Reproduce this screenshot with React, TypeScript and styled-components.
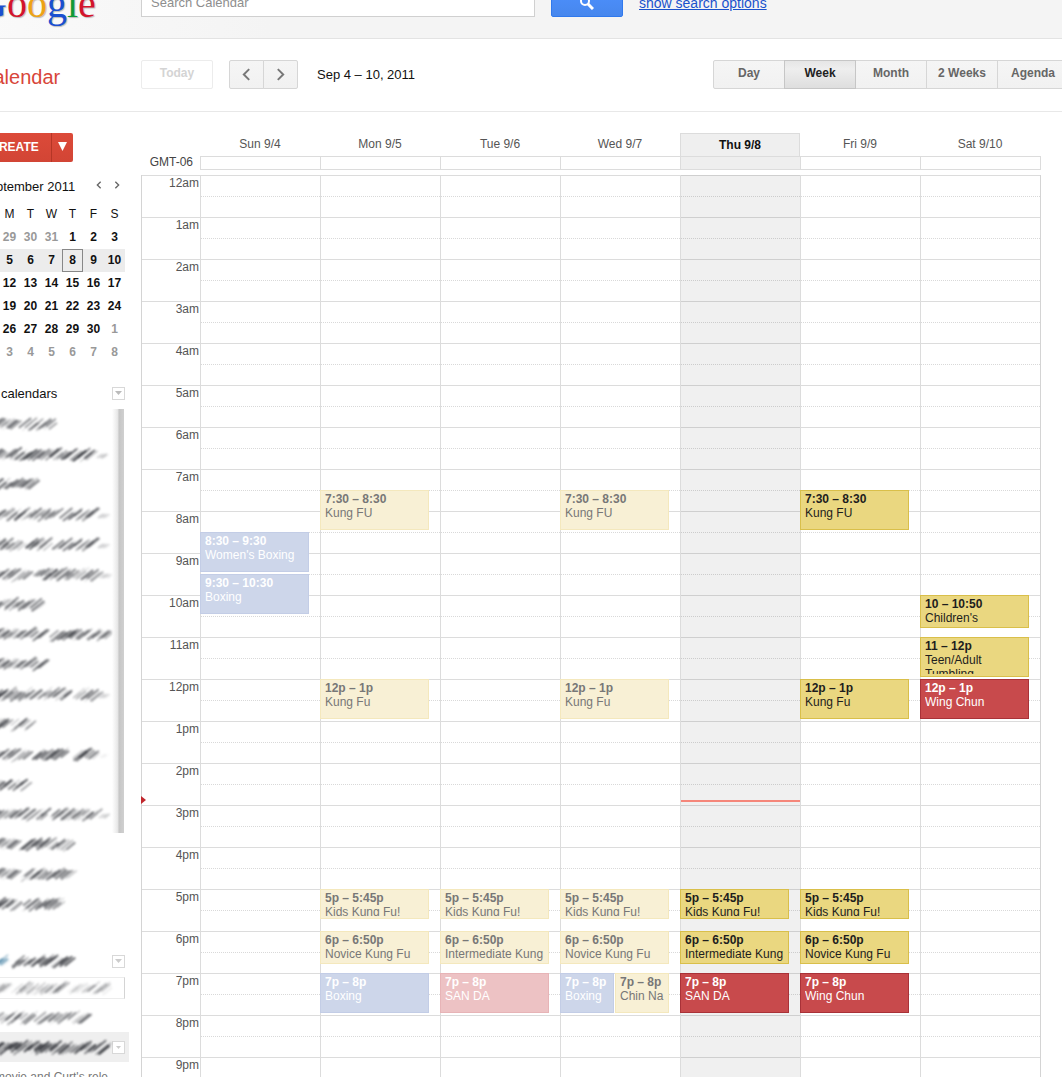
import React from "react";
import styled, { createGlobalStyle, css } from "styled-components";

const GlobalStyle = createGlobalStyle`
  *, *::before, *::after { box-sizing: border-box; }
  body {
    margin: 0;
    background: #fff;
    color: #222;
    font-family: "Liberation Sans", Arial, Helvetica, sans-serif;
    font-size: 12px;
  }
  button, input { font: inherit; color: inherit; margin: 0; }
  button { cursor: pointer; }
`;

const HOUR = 42;
const LINE = "#dcdcdc";

/* ---------- page frame ---------- */

const Viewport = styled.div`
  height: 100vh;
  overflow: hidden;
`;

const Page = styled.div`
  margin: -30px 0 0 -30px;
`;

const Header = styled.header`
  display: grid;
  grid-template-columns: 171px 394px 1fr;
  align-items: start;
  height: 69px;
  background: linear-gradient(90deg, #fafafa, #f4f4f4 300px);
  border-bottom: 1px solid #e3e3e3;
`;

const Logo = styled.div`
  padding: 14px 0 0 8px;
  font-family: "Liberation Serif", "Times New Roman", serif;
  font-size: 40px;
  line-height: 40px;
  text-shadow: 1px 1px 1px #bbb;
`;

const Letter = styled.span<{ $color: string }>`
  color: ${(p) => p.$color};
`;

const SearchInput = styled.input`
  width: 100%;
  height: 29px;
  margin-top: 18px;
  padding: 0 9px;
  border: 1px solid #d0d0d0;
  border-radius: 0;
  background: #fff;
  font-size: 13px;
  &::placeholder { color: #8e8e8e; opacity: 1; }
`;

const SearchActions = styled.div`
  display: flex;
  align-items: center;
  gap: 16px;
  padding: 18px 0 0 16px;
`;

const SearchButton = styled.button`
  display: flex;
  align-items: center;
  justify-content: center;
  width: 72px;
  height: 29px;
  padding: 0;
  border: 1px solid #3079ed;
  border-radius: 2px;
  background: linear-gradient(#4d90fe, #4787ed);
`;

const OptionsLink = styled.a`
  color: #1a52cc;
  font-size: 14px;
  line-height: 20px;
`;

const Toolbar = styled.div`
  display: flex;
  align-items: center;
  height: 73px;
  padding-bottom: 2px;
  border-bottom: 1px solid #e8e8e8;
  overflow: hidden;
`;

const AppTitle = styled.h1`
  flex: none;
  width: 171px;
  margin: 0;
  padding: 6px 0 0 9px;
  color: #d8463a;
  font-size: 20px;
  font-weight: normal;
  line-height: 24px;
`;

const TodayButton = styled.button`
  width: 72px;
  height: 29px;
  padding: 0 0 2px;
  border: 1px solid #ececec;
  border-radius: 2px;
  background: #fff;
  color: #d4d4d4;
  font-weight: bold;
`;

const ButtonGroup = styled.div`
  display: flex;
  flex: none;
`;

const groupButton = css`
  height: 29px;
  border: 1px solid #d6d6d6;
  background: linear-gradient(#f5f5f5, #f1f1f1);
  &:first-child { border-radius: 2px 0 0 2px; }
  &:last-child { border-radius: 0 2px 2px 0; }
  & + & { margin-left: -1px; }
`;

const StepButton = styled.button`
  ${groupButton}
  display: flex;
  align-items: center;
  justify-content: center;
  width: 35px;
  padding: 0;
`;

const StepGroup = styled(ButtonGroup)`
  margin: 0 19px 0 16px;
`;

const RangeLabel = styled.div`
  flex: 1;
  color: #111;
  font-size: 13px;
`;

const ViewGroup = styled(ButtonGroup)`
  margin-right: -7px;
`;

const ViewButton = styled.button<{ $active?: boolean }>`
  ${groupButton}
  width: 72px;
  padding: 0 0 2px;
  color: #666;
  font-weight: bold;
  ${(p) =>
    p.$active &&
    css`
      position: relative;
      border-color: #c6c6c6;
      background: linear-gradient(#e6e6e6, #eee 30%, #dedede);
      color: #222;
    `}
`;

const Body = styled.div`
  display: grid;
  grid-template-columns: 171px minmax(0, 1fr);
`;

/* ---------- sidebar ---------- */

const Sidebar = styled.aside`
  padding: 21px 12px 0 8px;
`;

const Section = styled.div`
  width: 147px;
`;

const CreateGroup = styled.div`
  display: flex;
  width: max-content;
`;

const CreateButton = styled.button<{ $menu?: boolean }>`
  display: flex;
  align-items: center;
  justify-content: center;
  width: ${(p) => (p.$menu ? 22 : 73)}px;
  height: 29px;
  padding: 0 0 2px;
  border: 0;
  border-left: ${(p) => (p.$menu ? "1px solid #b53626" : "0")};
  border-radius: ${(p) => (p.$menu ? "0 2px 2px 0" : "2px 0 0 2px")};
  background: linear-gradient(#dc4a39, #d24535);
  color: #fff;
  font-weight: bold;
`;

const MonthBar = styled.div`
  display: flex;
  align-items: center;
  height: 20px;
  margin: 14px 0 7px;
  padding-left: 2px;
  color: #111;
  font-size: 13px;
`;

const MonthName = styled.span`
  flex: 1;
`;

const MonthStep = styled.button`
  display: flex;
  align-items: center;
  justify-content: center;
  width: 18px;
  height: 16px;
  padding: 0 0 2px 2px;
  border: 0;
  background: none;
`;

const MiniMonth = styled.table`
  width: 147px;
  table-layout: fixed;
  border-collapse: collapse;
  color: #111;
  text-align: center;
  th, td { height: 23px; padding: 0; line-height: 21px; }
  th { font-weight: normal; }
`;

const WeekRow = styled.tr<{ $current: boolean }>`
  background: ${(p) => (p.$current ? "#ececec" : "transparent")};
`;

const MiniDay = styled.td<{ $muted: boolean; $today: boolean }>`
  color: ${(p) => (p.$muted ? "#999" : "#111")};
  font-weight: bold;
  outline: ${(p) => (p.$today ? "1px solid #888" : "none")};
  outline-offset: -1px;
`;

const ListHeading = styled.div`
  display: flex;
  align-items: center;
  justify-content: space-between;
  height: 20px;
  color: #111;
  font-size: 13px;
`;

const MyHeading = styled(ListHeading)`
  margin: 19px 0 6px;
  padding-left: 2px;
`;

const OtherHeading = styled(ListHeading)`
  margin: 32px 0 6px;
`;

const MenuButton = styled.button`
  display: flex;
  flex: none;
  align-items: center;
  justify-content: center;
  width: 13px;
  height: 13px;
  padding: 0;
  border: 1px solid #d8d8d8;
  background: #fff;
`;

const CalendarList = styled.ul`
  position: relative;
  margin: 0;
  padding: 0;
  list-style: none;
`;

const ListShade = styled.div`
  position: absolute;
  top: 0;
  right: 1px;
  width: 12px;
  height: 424px;
  background: linear-gradient(90deg, rgba(255, 255, 255, 0), #e8e8e8 45%, #c6c6c6 60%, #d0d0d0);
`;

const CalendarItem = styled.li<{ $selected?: boolean }>`
  display: flex;
  align-items: center;
  justify-content: space-between;
  height: 30px;
  width: ${(p) => (p.$selected ? 151 : 147)}px;
  padding-right: ${(p) => (p.$selected ? 4 : 0)}px;
  background: ${(p) => (p.$selected ? "#efefef" : "transparent")};
  color: #777;
`;

const CalendarText = styled.span`
  padding-left: 17px;
  white-space: nowrap;
`;

const AddField = styled.div`
  display: grid;
  height: 22px;
  margin-bottom: 3px;
  > * { grid-area: 1 / 1; }
`;

const AddInput = styled.input`
  width: 100%;
  height: 22px;
  border: 1px solid #d4d4d4;
  border-top-color: #ececec;
  border-bottom-color: #ececec;
  background: #fff;
`;

type Span = [number, number];

const SmudgeSvg = styled.svg`
  display: block;
  flex: none;
  filter: blur(1px);
`;

const noise = (n: number) => {
  const v = Math.sin(n * 127.1 + 11.7) * 43758.5453;
  return v - Math.floor(v);
};

/* Pencil-like hatching that stands for a hidden calendar name. */
function Smudge({ spans, tone = 0.5, fade, tint }: { spans: Span[]; tone?: number; fade?: number; tint?: string }) {
  const strokes: React.ReactNode[] = [];
  const hatch = (from: number, to: number, weight: number, low: boolean) => {
    for (let x = from; x < to - 4; x += 2) {
      const a = noise(x + to * 3);
      const b = noise(x * 5 + to);
      const c = noise(x * 9 + to * 7);
      const mid = low ? 13 : 9 + a * 5;
      const half = low ? 2 : 3 + b * 3;
      strokes.push(
        <line
          key={`${from}-${x}`}
          x1={22 + x + 2 - half}
          y1={mid + half * 0.8}
          x2={22 + x + 2 + half}
          y2={mid - half * 0.8}
          stroke={tint && x < 8 ? tint : "#303238"}
          strokeWidth={1.2 + c}
          strokeLinecap="round"
          opacity={weight * (0.2 + c * 1.1)}
        />
      );
    }
  };
  spans.forEach(([a, b]) => hatch(a, b, tone, false));
  if (fade) hatch(spans[spans.length - 1][1], fade, tone * 0.35, true);
  return (
    <SmudgeSvg width="134" height="22" viewBox="0 0 134 22" aria-hidden="true">
      {strokes}
    </SmudgeSvg>
  );
}

/* ---------- week view ---------- */

const Week = styled.main`
  padding: 21px 21px 0 0;
`;

const HeadRow = styled.div`
  display: grid;
  grid-template-columns: 59px repeat(7, minmax(0, 1fr));
  padding-right: 1px;
`;

const DayName = styled.div<{ $today: boolean }>`
  height: 23px;
  line-height: 23px;
  color: #555;
  text-align: center;
  ${(p) =>
    p.$today &&
    css`
      border: 1px solid ${LINE};
      border-bottom: 0;
      background: #efefef;
      color: #111;
      font-weight: bold;
    `}
`;

const Zone = styled.div`
  padding-right: 7px;
  color: #444;
  line-height: 12px;
  text-align: right;
`;

const AllDayCell = styled.div<{ $today: boolean }>`
  height: 14px;
  border: 1px solid ${LINE};
  border-right: 0;
  background: ${(p) => (p.$today ? "#eee" : "#fff")};
  &:last-child { margin-right: -1px; border-right: 1px solid ${LINE}; }
`;

const TimeGrid = styled.div`
  position: relative;
  display: grid;
  margin-top: 5px;
  border: 1px solid #d4d4d4;
  border-width: 0 1px;
`;

const Hours = styled.div`
  grid-area: 1 / 1;
`;

const HourRow = styled.div`
  display: grid;
  grid-template-columns: 58px 1fr;
  height: ${HOUR}px;
  border-top: 1px solid ${LINE};
`;

const HourLabel = styled.div`
  padding-right: 1px;
  color: #555;
  line-height: 15px;
  text-align: right;
`;

const HalfLine = styled.div`
  height: 21px;
  border-bottom: 1px dotted #d9d9d9;
`;

const Days = styled.div`
  grid-area: 1 / 1;
  display: grid;
  grid-template-columns: repeat(7, minmax(0, 1fr));
  padding-left: 58px;
`;

/* Each row of a day is five minutes long. */
const DayColumn = styled.div<{ $today: boolean }>`
  display: grid;
  grid-template-columns: repeat(2, minmax(0, 1fr));
  grid-template-rows: repeat(288, minmax(0, 1fr));
  column-gap: 2px;
  height: ${HOUR * 24}px;
  padding-right: 11px;
  border-left: 1px solid ${LINE};
  background: ${(p) => (p.$today ? "rgba(0, 0, 0, 0.06)" : "transparent")};
`;

const palette = {
  gold: ["#ead780", "#d9bf4a", "#1d1d1d"],
  goldPast: ["#f8f0d5", "#f4e8bd", "#777"],
  bluePast: ["#cdd6ea", "#c3cde6", "#fff"],
  red: ["#c84a4c", "#a93238", "#fff"],
  redPast: ["#edc2c4", "#e7b4b7", "#fff"],
};
type Tone = keyof typeof palette;

const columns = { full: "1 / 3", left: "1", right: "2" };

const EventBox = styled.div<{ $tone: Tone; $start: number; $end: number; $side: keyof typeof columns }>`
  display: flex;
  flex-direction: column;
  min-width: 0;
  min-height: 0;
  grid-column: ${(p) => columns[p.$side]};
  grid-row: ${(p) => Math.round(p.$start * 12) + 1} / ${(p) => Math.round(p.$end * 12) + 1};
  margin: 0 0 2px -1px;
  padding: 1px 2px 2px 4px;
  border: 1px solid ${(p) => palette[p.$tone][1]};
  background: ${(p) => palette[p.$tone][0]};
  color: ${(p) => palette[p.$tone][2]};
  line-height: 14px;
`;

const EventText = styled.div`
  flex: 1;
  min-height: 0;
  overflow: hidden;
`;

const EventTime = styled.div`
  font-weight: bold;
  white-space: nowrap;
`;

const NowLine = styled.div<{ $at: number }>`
  grid-column: 1 / 3;
  grid-row: ${(p) => Math.ceil(p.$at * 12)};
  align-self: end;
  height: 2px;
  margin-right: -11px;
  background: #f5867a;
`;

const NowMark = styled.svg<{ $at: number }>`
  position: absolute;
  left: -1px;
  top: ${(p) => Math.round(p.$at * HOUR) - 4}px;
`;

/* ---------- data ---------- */

interface Entry {
  start: number;
  end: number;
  time: string;
  title: string;
  tone: Tone;
  side?: keyof typeof columns;
}

const kungFu = (tone: Tone): Entry[] => [
  { start: 7.5, end: 8.5, time: "7:30 – 8:30", title: "Kung FU", tone },
  { start: 12, end: 13, time: "12p – 1p", title: "Kung Fu", tone },
];
const evening = (tone: Tone, title: string): Entry[] => [
  { start: 17, end: 17.75, time: "5p – 5:45p", title: "Kids Kung Fu!", tone },
  { start: 18, end: 18 + 10 / 12, time: "6p – 6:50p", title, tone },
];
const late = (tone: Tone, title: string, side?: Entry["side"]): Entry => ({
  start: 19, end: 20, time: "7p – 8p", title, tone, side,
});

const days: { name: string; today?: boolean; entries: Entry[] }[] = [
  {
    name: "Sun 9/4",
    entries: [
      { start: 8.5, end: 9.5, time: "8:30 – 9:30", title: "Women's Boxing", tone: "bluePast" },
      { start: 9.5, end: 10.5, time: "9:30 – 10:30", title: "Boxing", tone: "bluePast" },
    ],
  },
  { name: "Mon 9/5", entries: [...kungFu("goldPast"), ...evening("goldPast", "Novice Kung Fu"), late("bluePast", "Boxing")] },
  { name: "Tue 9/6", entries: [...evening("goldPast", "Intermediate Kung Fu"), late("redPast", "SAN DA")] },
  {
    name: "Wed 9/7",
    entries: [
      ...kungFu("goldPast"),
      ...evening("goldPast", "Novice Kung Fu"),
      late("bluePast", "Boxing", "left"),
      late("goldPast", "Chin Na", "right"),
    ],
  },
  { name: "Thu 9/8", today: true, entries: [...evening("gold", "Intermediate Kung Fu"), late("red", "SAN DA")] },
  { name: "Fri 9/9", entries: [...kungFu("gold"), ...evening("gold", "Novice Kung Fu"), late("red", "Wing Chun")] },
  {
    name: "Sat 9/10",
    entries: [
      { start: 10, end: 10 + 10 / 12, time: "10 – 10:50", title: "Children's Tumbling", tone: "gold" },
      { start: 11, end: 12, time: "11 – 12p", title: "Teen/Adult Tumbling", tone: "gold" },
      { start: 12, end: 13, time: "12p – 1p", title: "Wing Chun", tone: "red" },
    ],
  },
];

const NOW = 14.88;

const hours = Array.from({ length: 24 }, (_, h) => `${h % 12 || 12}${h < 12 ? "am" : "pm"}`);

const weeks = [
  [28, 29, 30, 31, 1, 2, 3],
  [4, 5, 6, 7, 8, 9, 10],
  [11, 12, 13, 14, 15, 16, 17],
  [18, 19, 20, 21, 22, 23, 24],
  [25, 26, 27, 28, 29, 30, 1],
  [2, 3, 4, 5, 6, 7, 8],
];
const isMuted = (week: number, day: number) => (week === 0 && day > 20) || (week > 3 && day < 20);

const calendars: { spans: Span[]; fade?: number }[] = [
  { spans: [[-16, 20], [23, 56]] },
  { spans: [[-16, 96]], fade: 109 },
  { spans: [[-16, 38]] },
  { spans: [[-16, 61], [64, 98]], fade: 111 },
  { spans: [[-16, 25], [28, 51], [56, 98]], fade: 111 },
  { spans: [[-16, 32], [35, 100]], fade: 113 },
  { spans: [[-16, 45]] },
  { spans: [[-16, 48], [52, 113]] },
  { spans: [[-16, 48]] },
  { spans: [[-16, 72], [75, 100]], fade: 111 },
  { spans: [[-16, 11], [13, 34]] },
  { spans: [[-16, 32], [35, 69], [76, 100]], fade: 110 },
  { spans: [[-16, 31]] },
  { spans: [[-16, 50], [52, 99]], fade: 110 },
  { spans: [[-16, 20], [23, 75]] },
  { spans: [[-16, 20], [23, 76]] },
  { spans: [[-16, 21], [25, 64]] },
];

const letters: [string, string][] = [
  ["G", "#1a4fd0"],
  ["o", "#d3152c"],
  ["o", "#eda315"],
  ["g", "#1a4fd0"],
  ["l", "#109a35"],
  ["e", "#d3152c"],
];

function Chevron({ flip, size, color, width }: { flip?: boolean; size: number; color: string; width: number }) {
  return (
    <svg width={size} height={size} viewBox="0 0 12 12" fill="none" stroke={color} strokeWidth={width} aria-hidden="true">
      <path d={flip ? "M3.5 1 8.5 6 3.5 11" : "M8.5 1 3.5 6 8.5 11"} />
    </svg>
  );
}

function Down({ w, h, color }: { w: number; h: number; color: string }) {
  return (
    <svg width={w} height={h} viewBox="0 0 10 10" preserveAspectRatio="none" aria-hidden="true">
      <path d="M0 0H10L5 10Z" fill={color} />
    </svg>
  );
}

export default function App() {
  return (
    <Viewport>
      <GlobalStyle />
      <Page>
        <Header>
          <Logo>
            {letters.map(([char, color], i) => (
              <Letter key={i} $color={color}>{char}</Letter>
            ))}
          </Logo>
          <SearchInput type="search" placeholder="Search Calendar" aria-label="Search Calendar" />
          <SearchActions>
            <SearchButton type="button" aria-label="Search">
              <svg width="14" height="14" viewBox="0 0 14 14" fill="none" stroke="#fff" aria-hidden="true">
                <circle cx="5" cy="5" r="4" strokeWidth="2" />
                <path d="M8 8 13 13" strokeWidth="3" />
              </svg>
            </SearchButton>
            <OptionsLink href="#options">show search options</OptionsLink>
          </SearchActions>
        </Header>

        <Toolbar>
          <AppTitle>Calendar</AppTitle>
          <TodayButton type="button">Today</TodayButton>
          <StepGroup>
            <StepButton type="button" aria-label="Previous week">
              <Chevron size={13} color="#777" width={1.8} />
            </StepButton>
            <StepButton type="button" aria-label="Next week">
              <Chevron flip size={13} color="#777" width={1.8} />
            </StepButton>
          </StepGroup>
          <RangeLabel>Sep 4 – 10, 2011</RangeLabel>
          <ViewGroup>
            {["Day", "Week", "Month", "2 Weeks", "Agenda"].map((view) => (
              <ViewButton key={view} type="button" $active={view === "Week"}>{view}</ViewButton>
            ))}
          </ViewGroup>
        </Toolbar>

        <Body>
          <Sidebar>
            <Section>
              <CreateGroup>
                <CreateButton type="button">CREATE</CreateButton>
                <CreateButton type="button" $menu aria-label="Create menu">
                  <Down w={9} h={9} color="#fff" />
                </CreateButton>
              </CreateGroup>

              <MonthBar>
                <MonthName>September 2011</MonthName>
                <MonthStep type="button" aria-label="Previous month">
                  <Chevron size={8} color="#666" width={2} />
                </MonthStep>
                <MonthStep type="button" aria-label="Next month">
                  <Chevron flip size={8} color="#666" width={2} />
                </MonthStep>
              </MonthBar>

              <MiniMonth>
                <thead>
                  <tr>
                    {["S", "M", "T", "W", "T", "F", "S"].map((d, i) => (
                      <th key={i} scope="col">{d}</th>
                    ))}
                  </tr>
                </thead>
                <tbody>
                  {weeks.map((week, w) => (
                    <WeekRow key={w} $current={w === 1}>
                      {week.map((day) => (
                        <MiniDay key={day} $muted={isMuted(w, day)} $today={w === 1 && day === 8}>{day}</MiniDay>
                      ))}
                    </WeekRow>
                  ))}
                </tbody>
              </MiniMonth>

              <MyHeading>
                <span>My calendars</span>
                <MenuButton type="button" aria-label="My calendars menu">
                  <Down w={7} h={4} color="#bbb" />
                </MenuButton>
              </MyHeading>
              <CalendarList>
                {calendars.map((c, i) => (
                  <CalendarItem key={i}>
                    <Smudge spans={c.spans} fade={c.fade} />
                  </CalendarItem>
                ))}
                <ListShade />
              </CalendarList>

              <OtherHeading>
                <Smudge spans={[[-16, 10], [14, 74]]} tone={0.6} tint="#2a6f96" />
                <MenuButton type="button" aria-label="Other calendars menu">
                  <Down w={7} h={4} color="#ccc" />
                </MenuButton>
              </OtherHeading>
              <AddField>
                <AddInput type="text" aria-label="Add calendar" />
                <Smudge spans={[[-16, 12], [15, 67], [70, 111]]} tone={0.25} />
              </AddField>
              <CalendarList>
                <CalendarItem>
                  <Smudge spans={[[-16, 35], [38, 90]]} tone={0.42} />
                </CalendarItem>
                <CalendarItem $selected>
                  <Smudge spans={[[-16, 109]]} tone={0.7} />
                  <MenuButton type="button" aria-label="Calendar menu">
                    <Down w={5} h={3} color="#ccc" />
                  </MenuButton>
                </CalendarItem>
                <CalendarItem>
                  <CalendarText>movie and Curt's rele</CalendarText>
                </CalendarItem>
              </CalendarList>
            </Section>
          </Sidebar>

          <Week>
            <HeadRow>
              <div />
              {days.map((d) => (
                <DayName key={d.name} $today={!!d.today}>{d.name}</DayName>
              ))}
            </HeadRow>
            <HeadRow>
              <Zone>GMT-06</Zone>
              {days.map((d) => (
                <AllDayCell key={d.name} $today={!!d.today} />
              ))}
            </HeadRow>
            <TimeGrid>
              <Hours>
                {hours.map((h) => (
                  <HourRow key={h}>
                    <HourLabel>{h}</HourLabel>
                    <HalfLine />
                  </HourRow>
                ))}
              </Hours>
              <Days>
                {days.map((d) => (
                  <DayColumn key={d.name} $today={!!d.today}>
                    {d.today && <NowLine $at={NOW} />}
                    {d.entries.map((e) => (
                      <EventBox
                        key={e.start + e.title}
                        $tone={e.tone}
                        $start={e.start}
                        $end={e.end}
                        $side={e.side ?? "full"}
                      >
                        <EventText>
                          <EventTime>{e.time}</EventTime>
                          {e.title}
                        </EventText>
                      </EventBox>
                    ))}
                  </DayColumn>
                ))}
              </Days>
              <NowMark $at={NOW} width="5" height="8" viewBox="0 0 5 8" aria-hidden="true">
                <path d="M0 0 5 4 0 8Z" fill="#c0272d" />
              </NowMark>
            </TimeGrid>
          </Week>
        </Body>
      </Page>
    </Viewport>
  );
}
